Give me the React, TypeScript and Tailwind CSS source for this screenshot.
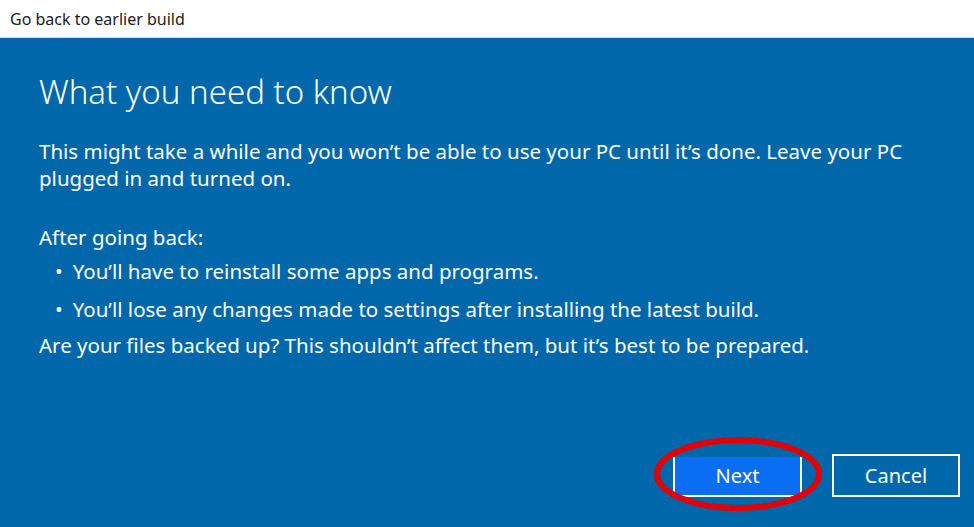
export default function App() {
  const font = { fontFamily: '"Noto Sans", "Open Sans", sans-serif' };

  return (
    <div className="flex h-[527px] w-[974px] flex-col overflow-hidden bg-[#0067ab] text-white" style={font}>
      {/* title bar */}
      <div className="flex h-[38px] shrink-0 items-center border-b border-[#d9d9d9] bg-white pl-[10px] text-[16px] text-[#1a1a1a]">
        Go back to earlier build
      </div>

      <div className="flex flex-1 flex-col pl-[39px] pr-[14px]">
        <h1 className="mt-[34px] text-[33px] font-light leading-[40px]">What you need to know</h1>

        <div className="pr-[40px] text-[20.5px] leading-[27px]">
          <p className="mt-[26px]">
            This might take a while and you won’t be able to use your PC until it’s done. Leave your PC plugged in and
            turned on.
          </p>

          <p className="mt-[32px]">After going back:</p>
          <ul className="mt-[7px] flex flex-col gap-[11px] pl-[16px]">
            <li className="flex gap-[10px]">
              <span>•</span>
              <span>You’ll have to reinstall some apps and programs.</span>
            </li>
            <li className="flex gap-[10px]">
              <span>•</span>
              <span>You’ll lose any changes made to settings after installing the latest build.</span>
            </li>
          </ul>
          <p className="mt-[9px]">Are your files backed up? This shouldn’t affect them, but it’s best to be prepared.</p>
        </div>

        <div className="mt-auto mb-[30px] flex items-end justify-end gap-[30px]">
          <div className="relative">
            <button className="h-[40px] w-[129px] border-x-2 border-b-2 border-white bg-[#0a6ef4] text-[20px]">
              Next
            </button>
            <svg
              className="pointer-events-none absolute left-[-20px] top-[-22px]"
              width="170"
              height="78"
              viewBox="0 0 170 78"
            >
              <ellipse cx="85" cy="39" rx="81" ry="34" fill="none" stroke="#e40000" strokeWidth="6" />
            </svg>
          </div>
          <button className="h-[43px] w-[128px] border-2 border-white text-[20px]">Cancel</button>
        </div>
      </div>
    </div>
  );
}
